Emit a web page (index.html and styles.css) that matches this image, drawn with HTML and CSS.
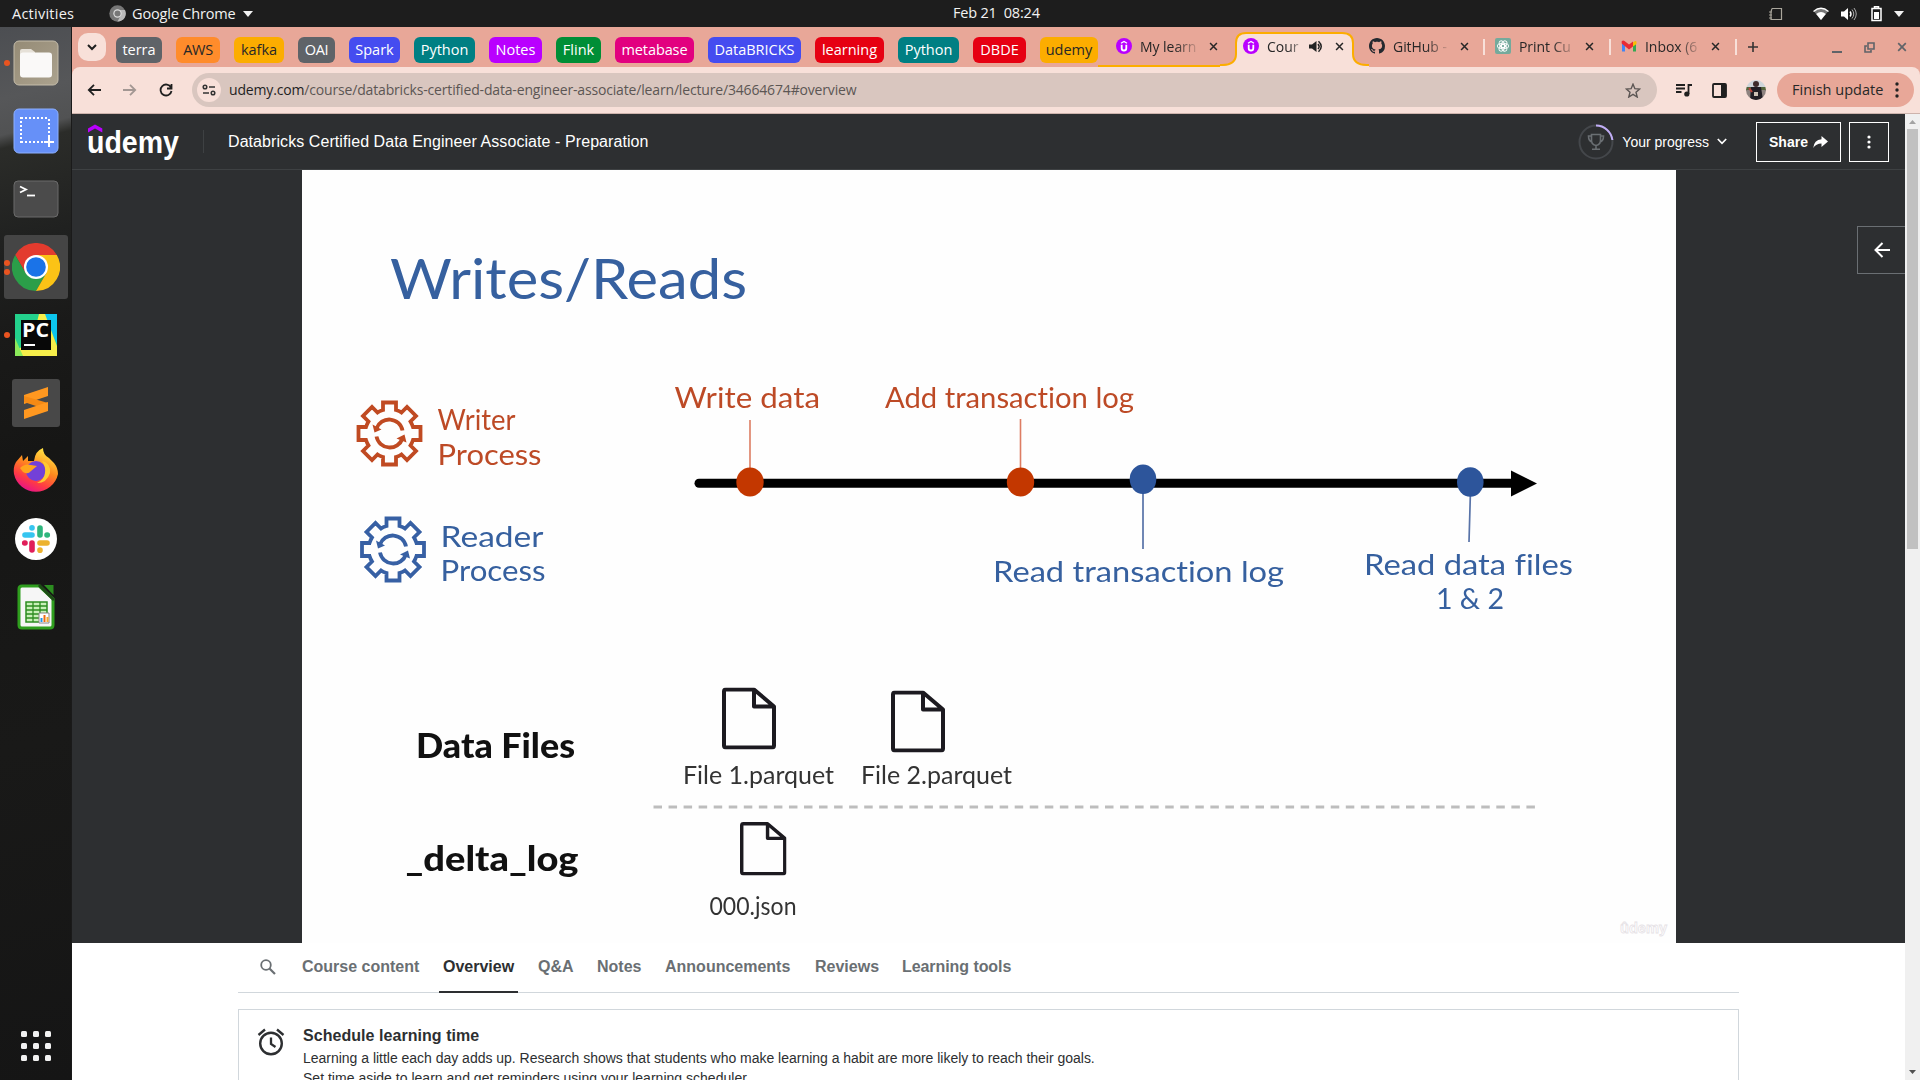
FILE: index.html
```html
<!DOCTYPE html>
<html lang="en">
<head>
<meta charset="utf-8">
<title>Course: Databricks Certified Data Engineer Associate</title>
<link rel="stylesheet" href="styles.css">
</head>
<body>
<svg class="defs" aria-hidden="true">
  <symbol id="close" viewBox="0 0 10 10"><path d="M1.2 1.2 8.8 8.8M8.8 1.2 1.2 8.8" stroke="currentColor" stroke-width="1.7" fill="none"/></symbol>
  <symbol id="udemy-fav" viewBox="0 0 16 16"><circle cx="8" cy="8" r="8" fill="#b900ff"/><path d="M5 5.2 8 3.4l3 1.8" stroke="#fff" stroke-width="1.3" fill="none"/><path d="M5.7 6.8v3.4a2.3 2.3 0 0 0 4.6 0V6.8" stroke="#fff" stroke-width="1.8" fill="none"/></symbol>
  <symbol id="gear" viewBox="-36 -36 72 72"><g fill="none" stroke="currentColor" stroke-width="3.8"><path d="M-6.500-31H6.500V-23.500Q10-22.500 12-21L17.500-26.500 26.500-17.500 21-12Q22.500-9.500 23.500-6.500H31V6.500H23.500Q22.500 9.500 21 12L26.500 17.500 17.500 26.500 12 21Q10 22.500 6.500 23.500V31H-6.500V23.500Q-10 22.500-12 21L-17.500 26.500-26.500 17.500-21 12Q-22.500 9.500-23.500 6.500H-31V-6.500H-23.500Q-22.500-9.500-21-12L-26.500-17.500-17.500-26.500-12-21Q-10-22.500-6.500-23.500Z"/><path d="M-13-5A13.500 13.500 0 0 1 13-3M13 5A13.500 13.500 0 0 1-13 3"/></g><path d="M-17-9-15-1-8-4zM17 9 15 1 7 5z" fill="currentColor"/></symbol>
  <symbol id="file" viewBox="0 0 54 62"><path d="M4 2H32L52 19V58Q52 60 50 60H4Q2 60 2 58V4Q2 2 4 2ZM32 2V19H52" fill="none" stroke="#1c1a20" stroke-width="4" stroke-linejoin="round"/></symbol>
</svg>

<header class="topbar">
  <span class="activities">Activities</span>
  <div class="appmenu">
    <svg width="17" height="17" viewBox="0 0 17 17"><circle cx="8.500" cy="8.500" r="8.200" fill="#777"/><path d="M8.500 5H16a8 8 0 0 1-7.500 11.500L12 10z" fill="#bbb"/><circle cx="8.500" cy="8.500" r="4.200" fill="#ddd"/><circle cx="8.500" cy="8.500" r="3" fill="#777"/></svg>
    <span>Google Chrome</span>
    <svg width="10" height="6" viewBox="0 0 10 6"><path d="M0 0h10L5 6z" fill="#f2f2f2"/></svg>
  </div>
  <span class="clock">Feb 21&nbsp; 08:24</span>
  <div class="tray">
    <svg class="t-card" width="14" height="14" viewBox="0 0 14 14"><path d="M3 1.500h9.500v11H2V9M2 9V4.500L3 1.500M0 5h3M0 8h3M0 11h3" stroke="#aaa69c" stroke-width="1.200" fill="none"/></svg>
    <svg class="t-wifi" width="16" height="14" viewBox="0 0 16 14"><path d="M1 4.500Q8-1.500 15 4.500L8 13z" fill="#777"/><path d="M3.200 7Q8 3.200 12.800 7L8 13z" fill="#fff"/><path d="M.5 4.500Q8-2 15.500 4.500" stroke="#fff" stroke-width="1.300" fill="none"/></svg>
    <svg class="t-vol" width="16" height="14" viewBox="0 0 16 14"><path d="M0 4.500h3L7 1v12L3 9.500H0z" fill="#fff"/><path d="M9 4.500q2 2.500 0 5" stroke="#fff" fill="none" stroke-width="1.400"/><path d="M11 2.500q3.500 4.500 0 9M13 1q4.500 6 0 12" stroke="#aaa" fill="none"/></svg>
    <svg class="t-bat" width="11" height="16" viewBox="0 0 11 16"><path d="M1 2.500h9v12H1zM3.500 2V.8h4V2" stroke="#fff" stroke-width="1.500" fill="none"/><path d="M3 6h5v7H3z" fill="#fff"/></svg>
    <svg width="10" height="6" viewBox="0 0 10 6"><path d="M0 0h10L5 6z" fill="#f2f2f2"/></svg>
  </div>
</header>

<div class="desktop">
  <nav class="dock">
    <div class="app run1"><svg width="46" height="46" viewBox="0 0 46 46"><defs><linearGradient id="fg" x1="0" y1="0" x2="1" y2="1"><stop offset="0" stop-color="#958b76"/><stop offset="1" stop-color="#aba28e"/></linearGradient></defs><rect x="1" y="1" width="44" height="44" rx="5" fill="url(#fg)" stroke="#c4bcaa"/><path d="M7 11q0-2 2-2h9l4 3v6H7z" fill="#e6e1d8"/><rect x="7" y="12.500" width="32" height="25" rx="3" fill="#faf9f8"/></svg></div>
    <div class="app"><svg width="46" height="46" viewBox="0 0 46 46"><rect x="1" y="1" width="44" height="44" rx="5" fill="#6690f8" stroke="#8db0ff"/><path d="M8 10H36M8 34H32" stroke="#fff" stroke-width="2" stroke-dasharray="2 2"/><path d="M8 9V35M36 11V29" stroke="#fff" stroke-width="2" stroke-dasharray="2 2"/><path d="M36 29V39M31 34H41" stroke="#fff" stroke-width="2"/></svg></div>
    <div class="app"><svg width="46" height="38" viewBox="0 0 46 38"><rect x="1" y="1" width="44" height="36" rx="4" fill="#4b4b4b" stroke="#6b6b6b"/><path d="M7 6.500 13 9.500 7 12.500" fill="none" stroke="#fff" stroke-width="1.800"/><path d="M14 15.500h8" stroke="#fff" stroke-width="1.800"/></svg></div>
    <div class="app run2 active"><svg width="48" height="48" viewBox="-24 -24 48 48"><path d="M0-12H20.800A24 24 0 0 0-20.800-12L-10.400 6 0-12Z" fill="#e33b2e"/><path d="M-20.800-12A24 24 0 0 0 0 24L10.400 6-10.400 6Z" fill="#2b9e49"/><path d="M20.800-12A24 24 0 0 1 0 24L10.400 6 0-12Z" fill="#fbc316"/><circle r="12" fill="#fff"/><circle r="9.800" fill="#1a73e8"/></svg></div>
    <div class="app run1"><svg width="42" height="42" viewBox="0 0 42 42"><path d="M0 0h42v42H0z" fill="#23d18c"/><path d="M28 0h14v30z" fill="#0cc6ee"/><path d="M24 0 30 0 42 32V42H8L0 38 18 24z" fill="#f6ee4a"/><path d="M0 24 8 42H0z" fill="#8bea5a"/><path d="M6 6h30v30H6z" fill="#080808"/><path d="M9 31h11" stroke="#fff" stroke-width="2"/><text x="7" y="22.500" class="pc" textLength="27" lengthAdjust="spacingAndGlyphs">PC</text></svg></div>
    <div class="app"><svg width="48" height="48" viewBox="0 0 48 48"><rect width="48" height="48" rx="3" fill="#484848"/><path d="M12 16 36 8V17L12 25z" fill="#ff9820"/><path d="M12 17 36 24V31L12 23z" fill="#f58a14"/><path d="M12 31 36 23V32L12 40z" fill="#ff9820"/></svg></div>
    <div class="app"><svg width="46" height="48" viewBox="0 0 46 48"><defs><linearGradient id="ff" x1=".8" y1="0" x2=".3" y2="1"><stop offset="0" stop-color="#fff34a"/><stop offset=".45" stop-color="#ff8a1e"/><stop offset=".75" stop-color="#ff3b44"/><stop offset="1" stop-color="#e5108c"/></linearGradient></defs><path d="M3 15 9 8l1 6 5-5v5h6Q22 4 30 1q0 7 6 10l5 5q4 5 4 11A22.500 22.500 0 0 1 1 27Q0 20 3 15z" fill="url(#ff)"/><circle cx="23" cy="24" r="10" fill="#7340d8"/><path d="M7 21q5-5 11-3l6 1-6 5q-3 4-8 1z" fill="#ffa51d"/><path d="M29 14q9 2 8 12-3 10-13 10 7-3 8-10 1-6-3-12z" fill="#ffca32"/></svg></div>
    <div class="app"><svg width="42" height="42" viewBox="0 0 42 42"><circle cx="21" cy="21" r="21" fill="#fff"/><g stroke-width="5.600" stroke-linecap="round"><path d="M10 17H17M17 10V9.700" stroke="#36c5f0"/><path d="M25 10V17M32 17h.3" stroke="#2eb67d"/><path d="M32 25H25M25 32v.3" stroke="#ecb22e"/><path d="M17 32V25M10 25h-.3" stroke="#e01e5a"/></g></svg></div>
    <div class="app"><svg width="38" height="46" viewBox="0 0 38 46"><path d="M5 2H22L36 15V41q0 3-3 3H5q-3 0-3-3V5q0-3 3-3z" fill="#f6f6f6" stroke="#2f9e1e" stroke-width="3"/><path d="M27 1H36.500V11z" fill="#2c8d20"/><path d="M22 1 37 16" stroke="#1d4d16" stroke-width="3"/><path d="M9 18h21v20H9z" fill="#c8f0b8" stroke="#2c8d20" stroke-width="1.500"/><path d="M9 22h21M9 26h21M9 30h21M9 34h21M16 18v20M23 18v20" stroke="#2c8d20" stroke-width="1.300"/><path d="M22 29h10v10H22z" fill="#fff" stroke="#888"/><path d="M23.500 34h2v4h-2z" fill="#2196e8"/><path d="M26.500 31h2v7h-2z" fill="#ee6a10"/><path d="M29.500 33h2v5h-2z" fill="#f5ab2c"/></svg></div>
    <div class="spacer"></div>
    <div class="grid9"><i></i><i></i><i></i><i></i><i></i><i></i><i></i><i></i><i></i></div>
  </nav>

  <main class="browser">
    <div class="tabstrip">
      <div class="tabsearch"><svg width="10" height="7" viewBox="0 0 10 7"><path d="M1 1 5 5 9 1" fill="none" stroke="#1f1f1f" stroke-width="2"/></svg></div>
      <div class="chips">
        <span class="chip gray w46">terra</span><span class="chip orange w44">AWS</span><span class="chip yellow w50">kafka</span><span class="chip gray w37">OAI</span><span class="chip blue w51">Spark</span><span class="chip teal w61">Python</span><span class="chip purple w53">Notes</span><span class="chip green w45">Flink</span><span class="chip pink w79">metabase</span><span class="chip blue w93">DataBRICKS</span><span class="chip red w69">learning</span><span class="chip teal w61">Python</span><span class="chip red w53">DBDE</span><span class="chip yellow w58">udemy</span>
      </div>
      <div class="tab first"><svg width="16" height="16"><use href="#udemy-fav"/></svg><span class="label">My learn</span><svg class="x" width="9" height="9"><use href="#close"/></svg></div>
      <div class="tab current">
        <svg class="outline" width="150" height="35" viewBox="0 0 150 35"><path d="M0 34Q16 34 16 22V11Q16 1 26 1H122Q133 1 133 11V22Q133 34 149 34V35H0z" fill="#f8e0d9"/><path d="M0 33H2Q16 33 16 22V11Q16 1 26 1H122Q133 1 133 11V22Q133 33 147 33H149" fill="none" stroke="#fcad00" stroke-width="2"/></svg>
        <svg width="16" height="16"><use href="#udemy-fav"/></svg><span class="label short">Cour</span>
        <svg class="speaker" width="15" height="13" viewBox="0 0 15 13"><path d="M0 4.500h3L7.500 1v11L3 8.500H0z" fill="#222"/><path d="M9 4q2.200 2.500 0 5M9.500 1.200q5.500 5.300 0 10.600" fill="none" stroke="#222" stroke-width="1.500"/></svg>
        <svg class="x" width="9" height="9"><use href="#close"/></svg></div>
      <div class="tab sep gh"><svg width="16" height="16" viewBox="0 0 16 16"><path fill="#24292f" d="M8 0C3.580 0 0 3.580 0 8c0 3.540 2.290 6.530 5.470 7.590.4.070.55-.17.55-.38 0-.19-.01-.82-.01-1.490-2.010.37-2.530-.49-2.690-.94-.09-.23-.48-.94-.82-1.130-.28-.15-.68-.52-.01-.53.630-.01 1.080.58 1.230.82.72 1.210 1.870.87 2.330.66.070-.52.280-.87.510-1.070-1.780-.2-3.640-.89-3.640-3.950 0-.87.310-1.590.82-2.150-.08-.2-.36-1.020.080-2.120 0 0 .67-.21 2.200.82.640-.18 1.320-.27 2-.27s1.360.09 2 .27c1.530-1.040 2.200-.82 2.200-.82.440 1.100.160 1.920.080 2.120.510.56.820 1.270.820 2.150 0 3.070-1.870 3.750-3.650 3.950.290.25.540.73.540 1.480 0 1.070-.01 1.930-.01 2.200 0 .21.150.46.550.38A8.010 8.010 0 0 0 16 8c0-4.420-3.580-8-8-8z"/></svg><span class="label">GitHub -</span><svg class="x" width="9" height="9"><use href="#close"/></svg></div>
      <div class="tab sep"><svg width="16" height="16" viewBox="0 0 16 16"><rect width="16" height="16" rx="2" fill="#74aa9c"/><g fill="none" stroke="#fff" stroke-width=".9"><ellipse cx="8" cy="6" rx="2.500" ry="3.700" transform="rotate(30 8 8)"/><ellipse cx="8" cy="6" rx="2.500" ry="3.700" transform="rotate(90 8 8)"/><ellipse cx="8" cy="6" rx="2.500" ry="3.700" transform="rotate(150 8 8)"/><ellipse cx="8" cy="6" rx="2.500" ry="3.700" transform="rotate(210 8 8)"/><ellipse cx="8" cy="6" rx="2.500" ry="3.700" transform="rotate(270 8 8)"/><ellipse cx="8" cy="6" rx="2.500" ry="3.700" transform="rotate(330 8 8)"/></g></svg><span class="label">Print Cu</span><svg class="x" width="9" height="9"><use href="#close"/></svg></div>
      <div class="tab sep"><svg width="16" height="16" viewBox="0 0 16 16"><path d="M1 3v10.500h3V7z" fill="#4285f4"/><path d="M15 3v10.500h-3V7z" fill="#34a853"/><path d="M12 4.500 14 3l1.500.5V6L12 8.500z" fill="#fbbc04"/><path d="M.7 5.500V3.200Q2 2 3.500 3L8 6.500 12 3.500v5L8 11.500z" fill="#ea2a33"/></svg><span class="label">Inbox (6</span><svg class="x" width="9" height="9"><use href="#close"/></svg></div>
      <svg class="plus" width="10" height="10" viewBox="0 0 10 10"><path d="M5 0V10M0 5H10" stroke="#333" stroke-width="1.600"/></svg>
      <div class="winctl">
        <svg width="10" height="12" viewBox="0 0 10 12"><path d="M0 11h10" stroke="#5f6368" stroke-width="2"/></svg>
        <svg width="11" height="11" viewBox="0 0 11 11"><path d="M4 1h6v6H4zM3 4H1v6h6V8" fill="none" stroke="#5f6368" stroke-width="1.600"/></svg>
        <svg width="10" height="10" color="#5f6368"><use href="#close"/></svg>
      </div>
    </div>

    <div class="toolbar">
      <div class="navbtns">
        <svg width="14" height="12" viewBox="0 0 14 12"><path d="M14 6H2M7 .8 1.800 6 7 11.200" fill="none" stroke="#1f1f1f" stroke-width="1.800"/></svg>
        <svg width="14" height="12" viewBox="0 0 14 12"><path d="M0 6H12M7 .8 12.200 6 7 11.200" fill="none" stroke="#a39793" stroke-width="1.800"/></svg>
        <svg width="14" height="14" viewBox="0 0 14 14"><path d="M12 4.500A5.500 5.500 0 1 0 12.500 8M12.500 1V5.500H8" fill="none" stroke="#1f1f1f" stroke-width="1.800"/></svg>
      </div>
      <div class="omnibox">
        <span class="siteinfo"><svg width="14" height="12" viewBox="0 0 14 12"><circle cx="3" cy="3" r="1.800" fill="none" stroke="#333" stroke-width="1.500"/><circle cx="11" cy="9" r="1.800" fill="none" stroke="#333" stroke-width="1.500"/><path d="M7 3h6M1 9h6" stroke="#333" stroke-width="1.600"/></svg></span>
        <span class="url"><b>udemy.com</b>/course/databricks-certified-data-engineer-associate/learn/lecture/34664674#overview</span>
        <svg width="16" height="15" viewBox="0 0 16 15"><path d="M8 1.200 9.900 5.700 14.700 6 11 9.200 12.200 14 8 11.400 3.800 14 5 9.200 1.300 6 6.100 5.700z" fill="none" stroke="#5c5654" stroke-width="1.400"/></svg>
      </div>
      <svg class="media" width="16" height="13" viewBox="0 0 16 13"><path d="M0 1h9M0 4.500h9M0 8h5.500M12.500 10V1H16" stroke="#1f1f1f" stroke-width="1.800" fill="none"/><circle cx="10.800" cy="10" r="2.600" fill="#1f1f1f"/></svg>
      <svg class="panel" width="15" height="15" viewBox="0 0 15 15"><rect x="1" y="1" width="13" height="13" rx="1" fill="none" stroke="#1f1f1f" stroke-width="1.800"/><path d="M9 1h5v13H9z" fill="#1f1f1f"/></svg>
      <svg class="avatar" width="20" height="20" viewBox="0 0 20 20"><defs><clipPath id="av"><circle cx="10" cy="10" r="10"/></clipPath></defs><g clip-path="url(#av)"><path d="M0 0h20v8H0z" fill="#ced5da"/><path d="M0 7h20v4H0z" fill="#55663d"/><path d="M0 10h20v10H0z" fill="#8e8380"/><path d="M5 7h10l2 13H4z" fill="#211d24"/><circle cx="10" cy="4" r="3" fill="#3e2b2b"/><path d="M8 12h4v4H8z" fill="#cbbfb4"/><path d="M3 8 6 12" stroke="#b8433b" stroke-width="2"/></g></svg>
      <div class="update"><span>Finish update</span><svg width="4" height="16" viewBox="0 0 4 16"><g fill="#222"><circle cx="2" cy="2" r="1.700"/><circle cx="2" cy="8" r="1.700"/><circle cx="2" cy="14" r="1.700"/></g></svg></div>
    </div>

    <div class="viewport">
      <div class="page">
        <header class="coursebar">
          <svg class="logo" width="94" height="36" viewBox="0 0 94 36"><path d="M1 4.600 8 .4 15.300 4.600V8.600L8 4.600 1 8.600z" fill="#b900ff"/><text x="0" y="28.500" class="logotext" textLength="92" lengthAdjust="spacingAndGlyphs">udemy</text></svg>
          <h1>Databricks Certified Data Engineer Associate - Preparation</h1>
          <div class="progress">
            <svg width="36" height="36" viewBox="0 0 36 36"><circle cx="18" cy="18" r="16.500" fill="none" stroke="#44474b" stroke-width="2"/><path d="M18 1.500A16.500 16.500 0 0 1 34.400 16" fill="none" stroke="#c0adf5" stroke-width="2"/><path d="M13.500 10.500h9v6q0 4-4.500 5-4.500-1-4.500-5zM13.500 12h-3q0 5 3.500 6M22.500 12h3q0 5-3.500 6M18 21.500V25M14 25.200h8" fill="none" stroke="#6a6f73" stroke-width="1.600"/></svg>
            <span>Your progress</span>
            <svg width="10" height="7" viewBox="0 0 10 7"><path d="M.8 1 5 5.300 9.200 1" fill="none" stroke="#fff" stroke-width="1.700"/></svg>
          </div>
          <button class="btn share"><span>Share</span><svg width="15" height="12" viewBox="0 0 15 12"><path d="M8.500 0 15 5.500 8.500 11V7.500Q3 7.500.2 12 1 4 8.500 3.300z" fill="#fff"/></svg></button>
          <button class="btn more"><svg width="4" height="14" viewBox="0 0 4 14"><g fill="#fff"><circle cx="2" cy="2" r="1.600"/><circle cx="2" cy="7" r="1.600"/><circle cx="2" cy="12" r="1.600"/></g></svg></button>
        </header>

        <section class="video">
          <svg class="slide" width="1374" height="773" viewBox="302 170 1374 773">
            <g class="soft">
            <text x="390" y="299" class="title blue-t" textLength="357" lengthAdjust="spacingAndGlyphs">Writes/Reads</text>
            <g class="t28 rust-t">
              <text x="437.500" y="430" textLength="78" lengthAdjust="spacingAndGlyphs">Writer</text>
              <text x="437.500" y="465" textLength="104" lengthAdjust="spacingAndGlyphs">Process</text>
              <text x="674.500" y="408" textLength="145.500" lengthAdjust="spacingAndGlyphs">Write data</text>
              <text x="885" y="408" textLength="249" lengthAdjust="spacingAndGlyphs">Add transaction log</text>
            </g>
            <g class="t28 blue-t">
              <text x="440.500" y="546.500" textLength="103" lengthAdjust="spacingAndGlyphs">Reader</text>
              <text x="440.500" y="581" textLength="105" lengthAdjust="spacingAndGlyphs">Process</text>
              <text x="993" y="581.500" textLength="291" lengthAdjust="spacingAndGlyphs">Read transaction log</text>
              <text x="1364" y="575" textLength="209" lengthAdjust="spacingAndGlyphs">Read data files</text>
              <text x="1436" y="609" textLength="68" lengthAdjust="spacingAndGlyphs">1 &amp; 2</text>
            </g>
            <use href="#gear" x="353.500" y="397.500" width="72" height="72" color="#c04a22"/>
            <use href="#gear" x="357" y="513.500" width="72" height="72" color="#3760a4"/>
            <path d="M699 483.300H1514" stroke="#000" stroke-width="9" stroke-linecap="round"/>
            <path d="M1511 470.500 1537 483.500 1511 496.500z" fill="#000"/>
            <path d="M750 420V470M1020.500 419V470" stroke="#dd7d63" stroke-width="1.600"/>
            <path d="M1143 490V549M1470.500 490 1469 542" stroke="#5873a8" stroke-width="1.700"/>
            <ellipse cx="750" cy="482" rx="13.700" ry="14.500" fill="#c33700"/>
            <ellipse cx="1020.500" cy="482" rx="13.700" ry="14.500" fill="#c33700"/>
            <ellipse cx="1143" cy="479.300" rx="13.300" ry="14.800" fill="#2d559b"/>
            <ellipse cx="1470.300" cy="482" rx="13.300" ry="14.800" fill="#2d559b"/>
            <g class="t34">
              <text x="416" y="757.500" textLength="159" lengthAdjust="spacingAndGlyphs">Data Files</text>
              <text x="405.500" y="871" textLength="173" lengthAdjust="spacingAndGlyphs">_delta_log</text>
            </g>
            <g class="t24">
              <text x="683" y="784" textLength="151" lengthAdjust="spacingAndGlyphs">File 1.parquet</text>
              <text x="861" y="784" textLength="151" lengthAdjust="spacingAndGlyphs">File 2.parquet</text>
              <text x="709.500" y="915" textLength="87" lengthAdjust="spacingAndGlyphs">000.json</text>
            </g>
            <use href="#file" x="722" y="687.500" width="54" height="62"/>
            <use href="#file" x="891" y="690.500" width="54" height="62"/>
            <use href="#file" x="740" y="822" width="46.500" height="53.400"/>
            <path d="M653.500 807H1535" stroke="#bdbdbd" stroke-width="3.200" stroke-dasharray="8.500 6.550"/>
            </g>
            <text x="1620" y="933" class="mark" textLength="47" lengthAdjust="spacingAndGlyphs">ûdemy</text>
          </svg>
          <button class="expand"><svg width="16" height="16" viewBox="0 0 16 16"><path d="M16 8H2M8.500 1 1.500 8l7 7" fill="none" stroke="#fff" stroke-width="2"/></svg></button>
        </section>

        <section class="below">
          <nav class="coursetabs">
            <svg width="16" height="16" viewBox="0 0 16 16"><circle cx="6" cy="6" r="4.800" fill="none" stroke="#6a6f73" stroke-width="1.800"/><path d="M9.500 9.500 15 15" stroke="#6a6f73" stroke-width="2.200"/></svg>
            <a class="c1">Course content</a><a class="c2 on">Overview</a><a class="c3">Q&amp;A</a><a class="c4">Notes</a><a class="c5">Announcements</a><a class="c6">Reviews</a><a class="c7">Learning tools</a>
          </nav>
          <article class="card">
            <svg width="28" height="28" viewBox="0 0 28 28"><circle cx="14" cy="15.500" r="10.800" fill="none" stroke="#2d2f31" stroke-width="2.400"/><path d="M14 9.500V16l4.500 3M1.500 7 8 1.500M26.500 7 20 1.500" fill="none" stroke="#2d2f31" stroke-width="2.300"/></svg>
            <div><h2>Schedule learning time</h2>
            <p class="l1">Learning a little each day adds up. Research shows that students who make learning a habit are more likely to reach their goals.</p>
            <p class="l2">Set time aside to learn and get reminders using your learning scheduler.</p></div>
          </article>
        </section>
      </div>
      <div class="scrollbar">
        <svg width="15" height="15" viewBox="0 0 15 15"><path d="M4 10h7L7.500 6z" fill="#a3a3a3"/></svg>
        <div class="thumb"></div>
        <svg width="15" height="15" viewBox="0 0 15 15"><path d="M4 5h7L7.500 9z" fill="#505050"/></svg>
      </div>
    </div>
  </main>
</div>
</body>
</html>
```
FILE: styles.css
```css
* { box-sizing: border-box; }
body { margin: 0; width: 1920px; height: 1080px; overflow: hidden; font-family: "Open Sans", "Noto Sans", sans-serif; background: #111; }
svg { display: block; flex: none; }
.defs { position: absolute; width: 0; height: 0; }

/* Desktop top bar */
.topbar { height: 27px; background: #1d1d1d; color: #f2f2f2; font-size: 14px; line-height: 27px; display: grid; grid-template-columns: 109px 844px 816px 1fr; white-space: nowrap; }
.activities { padding-left: 12px; font-size: 14.5px; letter-spacing: .25px; }
.appmenu { display: flex; align-items: center; gap: 6px; font-size: 14.5px; letter-spacing: -.16px; }
.appmenu span { margin-right: 1px; }
.clock { font-size: 14.5px; letter-spacing: -.2px; line-height: 26px; }
.tray { display: flex; align-items: center; }
.t-card { margin-right: 30px; }
.t-wifi { margin-right: 12px; }
.t-vol { margin-right: 14px; }
.t-bat { margin-right: 12px; }

.desktop { display: flex; height: 1053px; }

/* Dock */
.dock { width: 72px; display: flex; flex-direction: column; gap: 4px; align-items: center; padding: 4px 0 19px; background: linear-gradient(165deg, #4c4e52 0, #565759 70px, #515253 105px, #2b2c29 118px, #202120 210px, #1a1a19 300px, #161615 420px, #191918 700px, #151515 100%); border-right: 1px solid #1a1a1a; }
.app { width: 64px; height: 64px; display: flex; align-items: center; justify-content: center; border-radius: 3px; position: relative; flex: none; }
.app.active { background: #454545; }
.run1::before, .run2::before { content: ""; position: absolute; left: 0; top: 29px; width: 6px; height: 6px; border-radius: 50%; background: #e95420; }
.run2::before { top: 25px; box-shadow: 0 9px #e95420; }
.pc { font: bold 19px "Open Sans", sans-serif; fill: #fff; }
.spacer { flex: 1; }
.grid9 { display: grid; grid-template-columns: repeat(3, 6px); gap: 6px; }
.grid9 i { height: 6px; background: #f2f2f2; border-radius: 1.5px; }

/* Browser frame */
.browser { width: 1848px; display: flex; flex-direction: column; background: #e8a798; }
.tabstrip { height: 40px; display: flex; background: #e8a798; color: #272727; font-size: 14px; white-space: nowrap; }
.tabsearch { width: 28px; height: 28px; margin: 6px 10px 0 6px; border-radius: 10px; background: #f8e0d9; display: flex; align-items: center; justify-content: center; }
.chips { display: flex; gap: 14px; padding-top: 10px; }
.chip { height: 26px; border-radius: 6px; line-height: 25px; text-align: center; color: #fff; font-size: 14.5px; }
.gray { background: #5f6368; }
.orange { background: #ff8c2b; color: #272727; }
.yellow { background: #fcad00; color: #272727; }
.blue { background: #454cf0; }
.teal { background: #007f83; }
.purple { background: #b900ff; }
.green { background: #008e36; }
.pink { background: #e2007f; }
.red { background: #e60012; }
.w37 { width: 37px; letter-spacing: -.4px; } .w44 { width: 44px; letter-spacing: -.3px; } .w45 { width: 45px; } .w46 { width: 46px; } .w50 { width: 50px; }
.w51 { width: 51px; } .w53 { width: 53px; } .w58 { width: 58px; } .w61 { width: 61px; } .w69 { width: 69px; } .w79 { width: 79px; letter-spacing: -.1px; } .w93 { width: 93px; }

.tab { height: 40px; width: 126px; display: flex; align-items: center; padding: 0 0 2px 11px; position: relative; flex: none; }
.label { width: 55px; margin: 0 11px 0 8px; letter-spacing: -.05px; -webkit-mask-image: linear-gradient(90deg, #000 60%, transparent 105%); mask-image: linear-gradient(90deg, #000 60%, transparent 105%); }
.tab.first { width: 132px; padding-left: 18px; border-bottom: 2px solid #fcad00; padding-bottom: 0; }
.tab.first .label { width: 58px; }
.tab.current { width: 128px; padding-left: 13px; }
.current > * { position: relative; }
.current .outline { position: absolute; left: -10px; top: 5px; }
.label.short { width: 36px; margin-right: 6px; }
.speaker { margin-right: 11px; }
.tab.gh { padding-left: 11px; }
.gh .label { margin-right: 12px; }
.sep::after { content: ""; position: absolute; right: -1px; top: 12px; width: 2px; height: 16px; background: #f8e0d9; }
.plus { margin: 15px 74px 0 12px; }
.winctl { display: flex; gap: 22px; align-items: center; height: 40px; }

.toolbar { height: 47px; background: #f8e0d9; border-bottom: 1px solid #cdb3ac; border-radius: 8px 8px 0 0; display: flex; align-items: center; }
.navbtns { display: flex; gap: 22px; align-items: center; padding-left: 15px; width: 120px; }
.omnibox { width: 1465px; height: 34px; border-radius: 17px; background: #d9c6bf; display: flex; align-items: center; padding: 0 16px 0 5px; font-size: 14px; color: #5c5654; }
.siteinfo { width: 24px; height: 24px; border-radius: 50%; background: #f8e0d9; display: flex; align-items: center; justify-content: center; }
.url { flex: 1; margin-left: 8px; padding-bottom: 2px; letter-spacing: -.165px; white-space: nowrap; }
.url b { font-weight: normal; color: #1f1f1f; }
.media { margin-left: 19px; }
.panel { margin-left: 20px; }
.avatar { margin-left: 19px; }
.update { margin-left: 11px; width: 137px; height: 34px; border-radius: 17px; background: #e8a798; display: flex; align-items: center; justify-content: space-between; padding: 0 15px; font-size: 14.5px; color: #272727; white-space: nowrap; }
.update span { padding-bottom: 2px; }

/* Course page */
.viewport { height: 966px; display: flex; }
.page { width: 1833px; background: #fff; font-family: "Liberation Sans", Arial, sans-serif; color: #2d2f31; overflow: hidden; }
.coursebar { height: 56px; background: #2d2f31; border-bottom: 1px solid #3e4143; display: flex; align-items: center; padding: 0 16px 0 15px; color: #fff; }
.logotext { font: bold 31px "Liberation Sans", sans-serif; fill: #fff; }
.coursebar h1 { margin: 0 0 0 22px; height: 23px; line-height: 24px; padding-left: 24px; border-left: 1px solid #3e4143; font-size: 16px; font-weight: normal; letter-spacing: .075px; white-space: nowrap; }
.progress { margin-left: auto; margin-right: 29px; display: flex; align-items: center; gap: 8px; font-size: 14px; }
.btn { height: 40px; border: 1px solid #fff; background: none; padding: 0; color: #fff; display: flex; align-items: center; justify-content: center; font: bold 14px "Liberation Sans", sans-serif; }
.share { width: 85px; gap: 5px; margin-right: 8px; }
.more { width: 40px; }

.video { height: 773px; background: #2d2f31; display: flex; padding-left: 230px; }
.slide { background: #fefefe; }
.soft { filter: blur(.6px); }
.slide text { font-family: Lato, sans-serif; font-variant-ligatures: none; }
.title { font-size: 57px; }
.blue-t { fill: #36609f; }
.rust-t { fill: #bd4a26; }
.t28 { font-size: 28.5px; }
.t34 { font-size: 34.5px; font-weight: 900; fill: #111; }
.t24 { font-size: 24.5px; fill: #333; }
.slide .mark { font: bold 15px "Liberation Sans", sans-serif; fill: #fff; stroke: #e6e2e6; stroke-width: .8; }
.expand { width: 48px; height: 48px; margin: 56px 0 0 auto; border: 1px solid #6a6f73; border-right: 0; background: #2d2f31; display: flex; align-items: center; justify-content: center; padding: 0; }

.below { width: 1501px; margin-left: 166px; }
.coursetabs { height: 50px; display: flex; border-bottom: 1px solid #d1d7dc; padding-left: 22px; gap: 16px; }
.coursetabs svg { margin: 16px 6px 0 0; }
.coursetabs a { height: 50px; line-height: 48px; padding: 0 4px; font-weight: bold; font-size: 16px; color: #6a6f73; white-space: nowrap; }
.coursetabs .on { color: #2d2f31; border-bottom: 2px solid #2d2f31; }
.c1 { width: 125px; } .c2 { width: 79px; } .c3 { width: 43px; } .c4 { width: 52px; } .c5 { width: 134px; } .c6 { width: 71px; }
.coursetabs .c7 { letter-spacing: -.07px; }
.card { margin-top: 16px; height: 130px; border: 1px solid #d1d7dc; padding: 16px 18px; display: flex; gap: 18px; }
.card svg { margin-top: 2px; }
.card h2 { margin: 0; font-size: 16px; line-height: 20px; letter-spacing: .05px; }
.card p { margin: 2px 0 0; font-size: 14px; line-height: 20px; letter-spacing: -.016px; white-space: nowrap; }
.card .l2 { margin: 0; letter-spacing: .015px; }

.scrollbar { width: 15px; background: #f0f0f0; display: flex; flex-direction: column; align-items: center; }
.thumb { width: 11px; height: 420px; background: #c1c1c1; margin-bottom: auto; }
```
